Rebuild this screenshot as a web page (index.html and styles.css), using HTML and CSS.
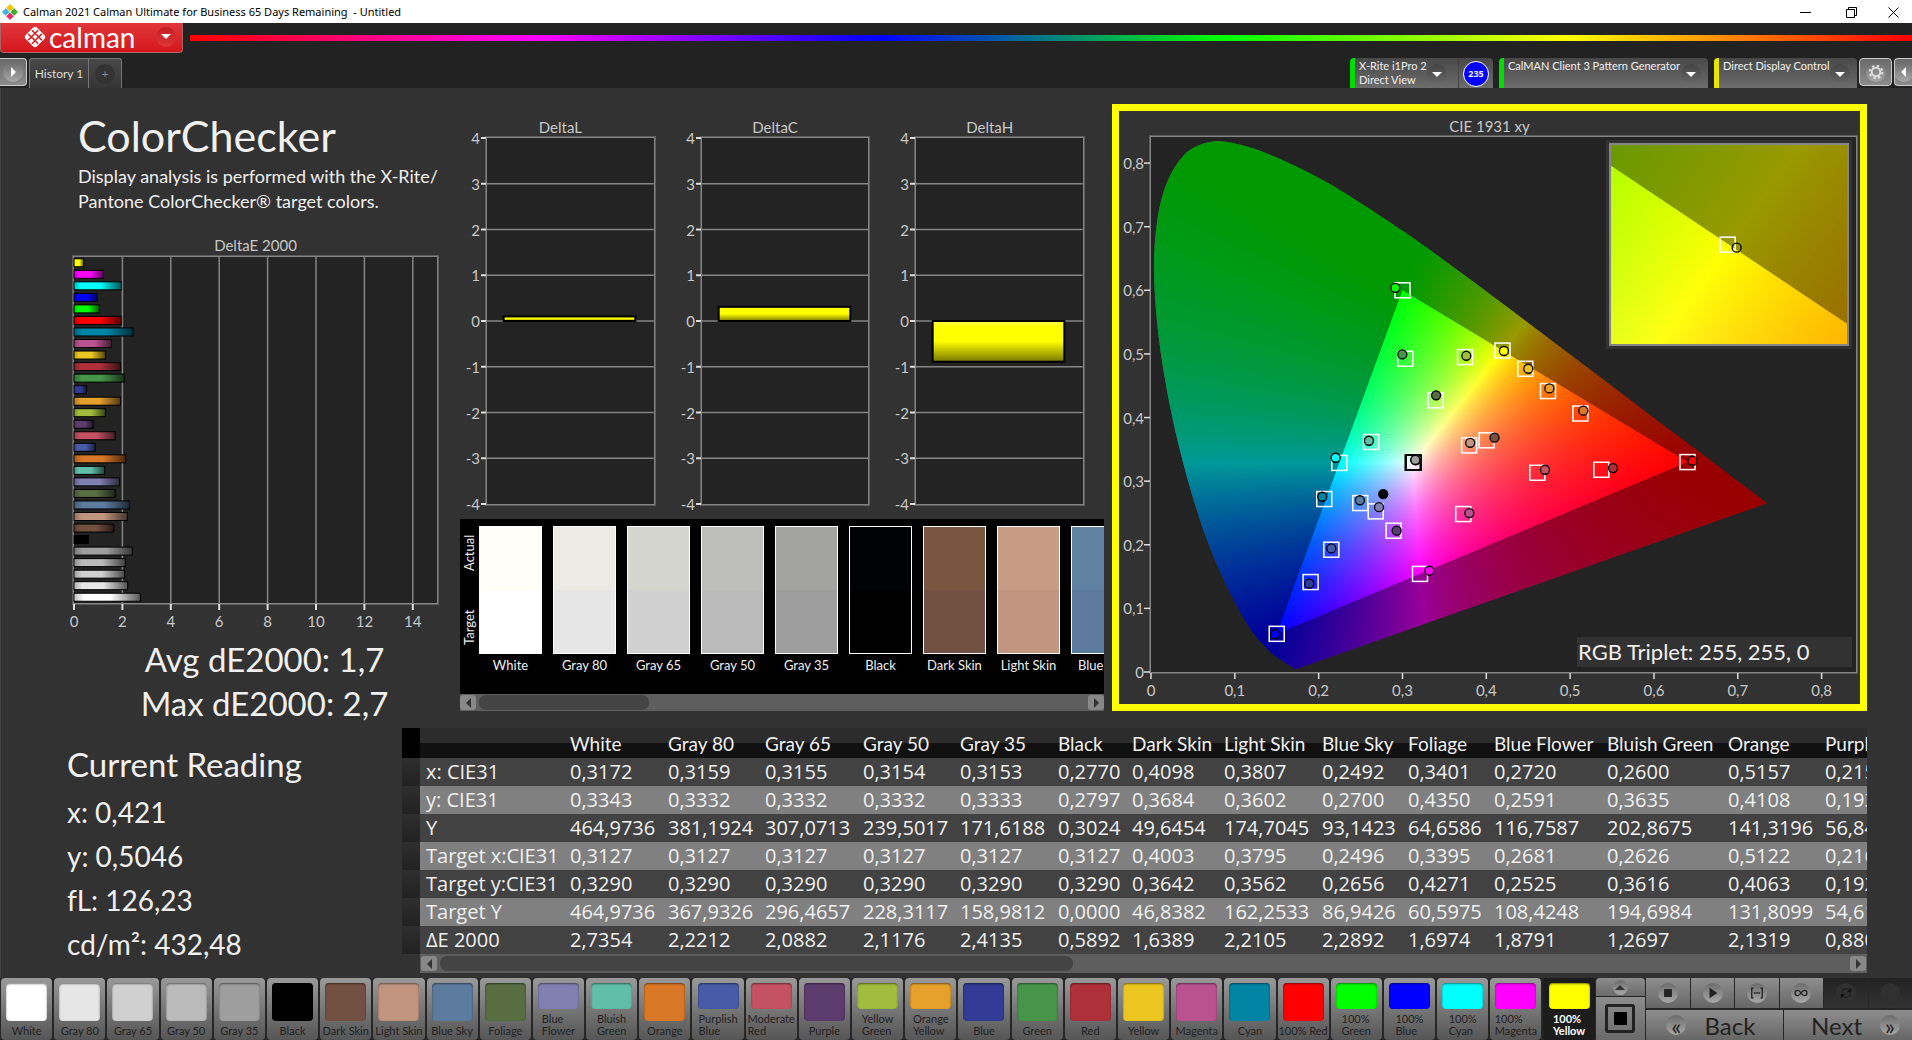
FILE: index.html
```html
<!DOCTYPE html>
<html lang="en">
<head>
  <meta charset="UTF-8">
  <meta name="viewport" content="width=device-width, initial-scale=1.0">
  <title>Calman 2021 - Untitled</title>
  <link rel="stylesheet" href="styles.css">
</head>
<body>
  <header class="titlebar">
    <svg class="app-icon" viewBox="0 0 16 16">
      <path d="M8 0l4 4-4 4-4-4z" fill="#f5c400"/>
      <path d="M4 4l4 4-4 4-4-4z" fill="#3fb4e8"/>
      <path d="M12 4l4 4-4 4-4-4z" fill="#3fae2a"/>
      <path d="M8 8l4 4-4 4-4-4z" fill="#ee2a6e"/>
      <path d="M4 4l4 4 4-4M4 12l4-4 4 4" fill="none" stroke="#fff"/>
    </svg>
    <span class="window-title">Calman 2021 Calman Ultimate for Business 65 Days Remaining&nbsp; - Untitled</span>
    <button class="win-btn" aria-label="Minimize"><svg viewBox="0 0 11 11"><path d="M0 5.500h11"/></svg></button>
    <button class="win-btn" aria-label="Restore"><svg viewBox="0 0 11 11"><path d="M.5 2.500h8v8h-8zM2.500 2.500v-2h8v8h-2"/></svg></button>
    <button class="win-btn win-close" aria-label="Close"><svg viewBox="0 0 11 11"><path d="M.5.500l10 10M10.500.500l-10 10"/></svg></button>
  </header>

  <div class="brandbar">
    <button class="brand">
      <svg class="brand-icon" viewBox="0 0 24 24">
        <rect x="4" y="4" width="16" height="16" rx="3" transform="rotate(45 12 12)" fill="#fff"/>
        <g transform="rotate(45 12 12)" fill="none" stroke="#d4222a" stroke-width="1.500">
          <path d="M9.400 5v14M14.600 5v14M5 9.400h14M5 14.600h14"/>
        </g>
      </svg>
      <span class="brand-name">calman</span>
      <span class="knob knob-red"><i class="caret"></i></span>
    </button>
    <div class="rainbow"></div>
  </div>

  <nav class="tabs">
    <button class="side-btn side-left" aria-label="Expand left panel"><span class="knob knob-light"><i class="arrow-right"></i></span></button>
    <div class="tab-group">
      <button class="tab">History 1</button>
      <button class="tab tab-add" aria-label="Add history"><span class="knob">+</span></button>
    </div>
    <div class="devices">
      <button class="device device-meter">
        <span class="device-name">X-Rite i1Pro 2<br>Direct View</span>
        <span class="knob"><i class="caret"></i></span>
        <span class="badge-cell"><span class="badge">235</span></span>
      </button>
      <button class="device device-source">
        <span class="device-name">CalMAN Client 3 Pattern Generator</span>
        <span class="knob"><i class="caret"></i></span>
      </button>
      <button class="device device-display">
        <span class="device-name">Direct Display Control</span>
        <span class="knob"><i class="caret"></i></span>
      </button>
      <button class="side-btn" aria-label="Settings">
        <span class="knob knob-light">
          <svg class="gear" viewBox="0 0 16 16">
            <circle cx="8" cy="8" r="4.300" fill="none" stroke="#ddd" stroke-width="2"/>
            <circle cx="8" cy="8" r="6.300" fill="none" stroke="#ddd" stroke-width="2" stroke-dasharray="2.500 2.450"/>
          </svg>
        </span>
      </button>
      <button class="side-btn side-right" aria-label="Expand right panel"><span class="knob knob-light"><i class="arrow-left"></i></span></button>
    </div>
  </nav>

  <main class="workspace">
    <section class="charts">
      <div class="summary">
        <h1>ColorChecker</h1>
        <p class="intro">Display analysis is performed with the X-Rite/<br>Pantone ColorChecker® target colors.</p>
        <h2 class="chart-title">DeltaE 2000</h2>
        <div class="plot plot-de"><svg id="deltaE"></svg></div>
        <div class="totals">Avg dE2000: 1,7<br>Max dE2000: 2,7</div>
      </div>

      <div class="middle">
        <div class="deltas">
          <div class="delta"><h2 class="chart-title">DeltaL</h2><div class="plot"><svg id="deltaL"></svg></div></div>
          <div class="delta"><h2 class="chart-title">DeltaC</h2><div class="plot"><svg id="deltaC"></svg></div></div>
          <div class="delta"><h2 class="chart-title">DeltaH</h2><div class="plot"><svg id="deltaH"></svg></div></div>
        </div>
        <div class="swatches">
          <div class="swatch-side"><span>Target</span><span>Actual</span></div>
          <div class="swatch-list" id="swatches"></div>
        </div>
        <div class="scroll">
          <button class="scroll-btn" aria-label="Scroll left"><i class="arrow-left"></i></button>
          <div class="scroll-track"><div class="scroll-thumb thumb-swatches"></div></div>
          <button class="scroll-btn" aria-label="Scroll right"><i class="arrow-right"></i></button>
        </div>
      </div>

      <div class="cie">
        <h2 class="chart-title">CIE 1931 xy</h2>
        <div class="plot plot-cie">
          <canvas id="gamut"></canvas>
          <svg id="cieMarks"></svg>
          <div class="inset">
            <canvas id="insetGamut"></canvas>
            <svg id="insetMarks"></svg>
          </div>
          <div class="triplet">RGB Triplet: 255, 255, 0</div>
        </div>
      </div>
    </section>

    <section class="readings">
      <div class="current">
        <h2>Current Reading</h2>
        <p>x: 0,421</p>
        <p>y: 0,5046</p>
        <p>fL: 126,23</p>
        <p>cd/m²: 432,48</p>
      </div>
      <div class="data">
        <div class="data-view">
          <table>
            <colgroup>
              <col class="c-handle"><col class="c-label"><col class="c-98"><col class="c-97"><col class="c-98"><col class="c-97"><col class="c-98"><col class="c-74"><col class="c-92"><col class="c-98"><col class="c-86"><col class="c-86"><col class="c-113"><col class="c-121"><col class="c-97"><col class="c-113">
            </colgroup>
            <thead>
              <tr><th class="handle"></th><th></th><th>White</th><th>Gray 80</th><th>Gray 65</th><th>Gray 50</th><th>Gray 35</th><th>Black</th><th>Dark Skin</th><th>Light Skin</th><th>Blue Sky</th><th>Foliage</th><th>Blue Flower</th><th>Bluish Green</th><th>Orange</th><th>Purplish Blue</th></tr>
            </thead>
            <tbody>
              <tr><td class="handle"></td><td>x: CIE31</td><td>0,3172</td><td>0,3159</td><td>0,3155</td><td>0,3154</td><td>0,3153</td><td>0,2770</td><td>0,4098</td><td>0,3807</td><td>0,2492</td><td>0,3401</td><td>0,2720</td><td>0,2600</td><td>0,5157</td><td>0,2151</td></tr>
              <tr><td class="handle"></td><td>y: CIE31</td><td>0,3343</td><td>0,3332</td><td>0,3332</td><td>0,3332</td><td>0,3333</td><td>0,2797</td><td>0,3684</td><td>0,3602</td><td>0,2700</td><td>0,4350</td><td>0,2591</td><td>0,3635</td><td>0,4108</td><td>0,1939</td></tr>
              <tr><td class="handle"></td><td>Y</td><td>464,9736</td><td>381,1924</td><td>307,0713</td><td>239,5017</td><td>171,6188</td><td>0,3024</td><td>49,6454</td><td>174,7045</td><td>93,1423</td><td>64,6586</td><td>116,7587</td><td>202,8675</td><td>141,3196</td><td>56,8413</td></tr>
              <tr><td class="handle"></td><td>Target x:CIE31</td><td>0,3127</td><td>0,3127</td><td>0,3127</td><td>0,3127</td><td>0,3127</td><td>0,3127</td><td>0,4003</td><td>0,3795</td><td>0,2496</td><td>0,3395</td><td>0,2681</td><td>0,2626</td><td>0,5122</td><td>0,2160</td></tr>
              <tr><td class="handle"></td><td>Target y:CIE31</td><td>0,3290</td><td>0,3290</td><td>0,3290</td><td>0,3290</td><td>0,3290</td><td>0,3290</td><td>0,3642</td><td>0,3562</td><td>0,2656</td><td>0,4271</td><td>0,2525</td><td>0,3616</td><td>0,4063</td><td>0,1922</td></tr>
              <tr><td class="handle"></td><td>Target Y</td><td>464,9736</td><td>367,9326</td><td>296,4657</td><td>228,3117</td><td>158,9812</td><td>0,0000</td><td>46,8382</td><td>162,2533</td><td>86,9426</td><td>60,5975</td><td>108,4248</td><td>194,6984</td><td>131,8099</td><td>54,6120</td></tr>
              <tr><td class="handle"></td><td>ΔE 2000</td><td>2,7354</td><td>2,2212</td><td>2,0882</td><td>2,1176</td><td>2,4135</td><td>0,5892</td><td>1,6389</td><td>2,2105</td><td>2,2892</td><td>1,6974</td><td>1,8791</td><td>1,2697</td><td>2,1319</td><td>0,8802</td></tr>
            </tbody>
          </table>
        </div>
        <div class="scroll scroll-data">
          <button class="scroll-btn" aria-label="Scroll left"><i class="arrow-left"></i></button>
          <div class="scroll-track"><div class="scroll-thumb thumb-data"></div></div>
          <button class="scroll-btn" aria-label="Scroll right"><i class="arrow-right"></i></button>
        </div>
      </div>
    </section>
  </main>

  <footer class="dock">
    <div class="tiles" id="tiles"></div>
    <div class="stack">
      <button class="stack-up" aria-label="Previous row"><span class="knob knob-light"><i class="arrow-up"></i></span></button>
      <button class="stack-window" aria-label="Pattern window"><span class="frame"></span></button>
    </div>
    <div class="transport">
      <div class="media">
        <button aria-label="Stop"><span class="knob knob-light"><svg viewBox="0 0 16 16"><path d="M3.500 3.500h9v9h-9z"/></svg></span></button>
        <button aria-label="Play"><span class="knob knob-light"><svg viewBox="0 0 16 16"><path d="M4 2l9 6-9 6z"/></svg></span></button>
        <button aria-label="Read series"><span class="knob knob-light"><svg viewBox="0 0 16 16"><path class="line" d="M4 2.500H2v11h2M12 2.500h2v11h-2M4.500 8h2M7 8h2M9.500 8h2"/></svg></span></button>
        <button aria-label="Read continuous"><span class="knob knob-light"><svg viewBox="0 0 16 16"><path class="line" d="M8 8C6.500 5.500 5.500 5 4.200 5a3 3 0 0 0 0 6C5.500 11 6.500 10.500 8 8s2.500-3 3.800-3a3 3 0 0 1 0 6C10.500 11 9.500 10.500 8 8z"/></svg></span></button>
        <button class="off" aria-label="Refresh"><span class="knob"><svg viewBox="0 0 16 16"><path class="line" d="M3 7.500a5 5 0 0 1 8.500-3M13 8.500a5 5 0 0 1-8.500 3"/><path d="M14 2v5H9zM2 14V9h5z"/></svg></span></button>
        <button class="off" aria-label="Record"><span class="knob"></span></button>
      </div>
      <div class="steps">
        <button class="back"><span class="knob knob-light">«</span>Back</button>
        <button class="next">Next<span class="knob knob-light">»</span></button>
      </div>
    </div>
  </footer>

  <script src="script.js"></script>
</body>
</html>
```
FILE: styles.css
```css
:root {
  --bar: #222;
  --panel: #323232;
  --plot: #232323;
  --line: #858585;
  --text: #f0f0f0;
  --muted: #c8c8c8;
  --select: #ff0;
}
* {
  box-sizing: border-box;
}
body {
  margin: 0;
  min-height: 100vh;
  display: flex;
  flex-direction: column;
  overflow: hidden;
  font-family: Lato, "Open Sans", sans-serif;
  background: var(--panel);
  color: var(--text);
}
button {
  margin: 0;
  padding: 0;
  border: none;
  background: none;
  font: inherit;
  color: inherit;
  cursor: pointer;
}
h1, h2, p {
  margin: 0;
  font-weight: 400;
}

/* Window title */
.titlebar {
  display: flex;
  align-items: center;
  height: 23px;
  padding-left: 2px;
  background: #fff;
  color: #000;
}
.app-icon {
  width: 16px;
  height: 16px;
}
.window-title {
  flex: 1;
  margin-left: 5px;
  font: 11px "Noto Sans", sans-serif;
}
.win-btn {
  width: 46px;
  height: 22px;
}
.win-close {
  width: 38px;
}
.win-btn svg {
  width: 11px;
  height: 11px;
  fill: none;
  stroke: #000;
}

/* Brand row */
.brandbar {
  display: flex;
  align-items: flex-start;
  gap: 7px;
  height: 35px;
  background: var(--bar);
}
.brand {
  display: flex;
  align-items: center;
  width: 183px;
  height: 30px;
  padding: 0 6px 2px 22px;
  border: 1px solid #a66;
  border-top: none;
  border-radius: 0 0 4px 4px;
  background: linear-gradient(#e0383c, #d4161c);
  color: #fff;
}
.brand-icon {
  width: 24px;
  height: 24px;
}
.brand-name {
  flex: 1;
  margin-left: 2px;
  font-size: 28px;
  line-height: 28px;
  text-align: left;
}
.rainbow {
  flex: 1;
  height: 6px;
  margin-top: 12px;
  background: linear-gradient(90deg, #f00, #f0f, #00f, #0f0, #ff0, #f00);
}

/* Round button centres and arrows */
.knob {
  display: inline-flex;
  flex: none;
  align-items: center;
  justify-content: center;
  width: 20px;
  height: 20px;
  border-radius: 50%;
  background: linear-gradient(#444, #666);
}
.knob-light {
  background: linear-gradient(#6c6c6c, #a8a8a8);
}
.knob-red {
  background: linear-gradient(#c01c20, #e0383c);
}
.caret, .arrow-right, .arrow-left, .arrow-up {
  width: 0;
  height: 0;
  border: 5px solid transparent;
}
.caret {
  margin-top: 5px;
  border-top-color: #fff;
}
.arrow-right {
  margin-left: 5px;
  border-left-color: #fff;
}
.arrow-left {
  margin-right: 5px;
  border-right-color: #fff;
}
.arrow-up {
  margin-bottom: 5px;
  border-bottom-color: #333;
}

/* Tabs and devices */
.tabs {
  display: flex;
  height: 30px;
  background: var(--bar);
}
.side-btn {
  display: flex;
  align-items: center;
  justify-content: center;
  width: 33px;
  height: 28px;
  border: 1px solid #ccc;
  border-radius: 4px;
  background: linear-gradient(#6a6a6a, #8c8c8c);
}
.side-left {
  width: 27px;
  border-left: none;
  border-radius: 0 4px 4px 0;
}
.side-right {
  width: 18px;
  border-right: none;
  border-radius: 4px 0 0 4px;
  overflow: hidden;
}
.gear {
  width: 16px;
  height: 16px;
}
.tab-group {
  display: flex;
  margin-left: 2px;
  border: 1px solid #777;
  border-bottom: none;
  border-radius: 3px 3px 0 0;
  background: linear-gradient(#484848, #353535);
}
.tab {
  width: 58px;
  font-size: 12px;
  color: #ddd;
}
.tab-add {
  width: 33px;
  border-left: 1px solid #777;
}
.tab-add .knob {
  background: #333;
  color: #888;
}
.devices {
  display: flex;
  gap: 2px;
  margin-left: auto;
}
.device {
  display: flex;
  align-items: flex-start;
  height: 30px;
  margin-right: 4px;
  padding: 1px 0 0 4px;
  border-left: 5px solid #0d0;
  border-radius: 4px 4px 0 0;
  background: linear-gradient(#484848, #6c6c6c);
  font-size: 11px;
  line-height: 14px;
  text-align: left;
}
.device .knob {
  margin: 5px 7px 0 0;
}
.device-name {
  flex: 1;
  white-space: nowrap;
}
.device-meter {
  width: 143px;
}
.device-meter .knob {
  margin-right: 11px;
}
.device-source {
  width: 209px;
}
.device-display {
  width: 143px;
  margin-right: 0;
  border-left-color: #e6e600;
}
.badge-cell {
  display: flex;
  align-items: center;
  justify-content: center;
  width: 35px;
  height: 29px;
  border-left: 1px solid #444;
}
.badge {
  width: 26px;
  height: 26px;
  border: 1px solid #fff;
  border-radius: 50%;
  background: #00f;
  font: bold 9px/24px "Open Sans", sans-serif;
  text-align: center;
}

/* Workspace */
.workspace {
  flex: 1;
  display: flex;
  flex-direction: column;
  gap: 17px;
  padding: 16px 45px 5px 0;
  border-left: 1px solid #444;
}
.charts {
  flex: 1;
  display: grid;
  grid-template-columns: 459fr 652fr 755fr;
}
.chart-title {
  font-size: 15px;
  line-height: 18px;
  text-align: center;
  color: var(--muted);
}
.plot {
  position: relative;
  flex: 1;
  border: 1px solid var(--line);
  outline: 1px solid #5c5c5c;
  background: var(--plot);
}
.plot svg {
  position: absolute;
  inset: 0;
  width: 100%;
  height: 100%;
  overflow: visible;
}
.plot text {
  fill: var(--muted);
  font-size: 15px;
}
.summary {
  display: flex;
  flex-direction: column;
}
h1 {
  margin: 7px 0 0 77px;
  font-size: 43px;
  line-height: 50px;
}
.intro {
  margin: 3px 0 0 77px;
  font-size: 18px;
  line-height: 25px;
  white-space: nowrap;
}
.summary .chart-title {
  margin: 22px 22px 2px 72px;
}
.plot-de {
  margin: 0 22px 0 72px;
}
.totals {
  margin: 33px 0 -14px 68px;
  font-size: 33px;
  line-height: 44px;
  text-align: center;
}
.middle {
  display: flex;
  flex-direction: column;
  min-width: 0;
  margin-right: 8px;
}
.deltas {
  flex: 1;
  display: flex;
  gap: 14px;
  padding: 14px 14px 14px 0;
}
.delta {
  flex: 1;
  display: flex;
  flex-direction: column;
}
.delta .chart-title {
  margin-bottom: 1px;
}
.delta .plot {
  margin: 0 6px 0 26px;
}

/* Actual and target swatches */
.swatches {
  display: flex;
  height: 175px;
  padding: 7px 0 0;
  background: #000;
  overflow: hidden;
}
.swatch-side {
  display: flex;
  justify-content: space-between;
  width: 19px;
  height: 128px;
  padding: 9px 0;
  font-size: 13px;
  line-height: 19px;
  writing-mode: vertical-rl;
  transform: rotate(180deg);
}
.swatch-list {
  display: flex;
  gap: 11px;
}
.swatch {
  flex: none;
  width: 63px;
  font-size: 13px;
  line-height: 22px;
  text-align: center;
  white-space: nowrap;
}
.swatch-color {
  display: flex;
  flex-direction: column;
  height: 128px;
  border: 1px solid #fff;
}
.swatch-color div {
  flex: 1;
}

/* Scroll bars */
.scroll {
  display: flex;
  align-items: center;
  gap: 3px;
  height: 17px;
  background: #5e5e5e;
}
.scroll-btn {
  display: flex;
  align-items: center;
  justify-content: center;
  width: 16px;
  height: 15px;
  border-radius: 3px;
  background: #888;
}
.scroll-btn .arrow-left {
  border-right-color: #333;
}
.scroll-btn .arrow-right {
  border-left-color: #333;
}
.scroll-track {
  flex: 1;
}
.scroll-thumb {
  height: 15px;
  border-radius: 7px;
  background: #444;
}
.thumb-swatches {
  width: 28%;
}
.thumb-data {
  width: 45%;
}

/* CIE diagram */
.cie {
  display: flex;
  flex-direction: column;
  padding: 6px 3px 31px 31px;
  border: 7px solid var(--select);
}
.cie .chart-title {
  margin: 0 0 1px -28px;
}
.plot-cie canvas, .inset canvas {
  position: absolute;
  inset: 0;
  width: 100%;
  height: 100%;
}
.inset {
  position: absolute;
  left: 65%;
  top: 6px;
  width: 34%;
  height: 38%;
  border: 2px solid var(--line);
  outline: 3px solid var(--panel);
}
.triplet {
  position: absolute;
  right: 4px;
  bottom: 5px;
  width: 39%;
  padding-left: 1px;
  background: var(--panel);
  font-size: 22px;
  line-height: 30px;
}

/* Readings and table */
.readings {
  display: flex;
}
.current {
  width: 401px;
  padding: 14px 0 0 66px;
  font-size: 28px;
  line-height: 44px;
}
.current h2 {
  margin-bottom: 4px;
  font-size: 33px;
}
.data {
  flex: 1;
  min-width: 0;
}
.data-view {
  overflow: hidden;
}
table {
  width: 1530px;
  table-layout: fixed;
  border-collapse: collapse;
  text-align: left;
  font: 20px "Open Sans", sans-serif;
}
th {
  height: 30px;
  padding: 0 0 0 6px;
  background: linear-gradient(#2c2c2c 50%, #111 50%);
  font: 19px Lato, sans-serif;
  white-space: nowrap;
}
td {
  height: 28px;
  padding: 0 0 0 6px;
  background: #424242;
  line-height: 28px;
  white-space: nowrap;
}
tbody tr:nth-child(even) td {
  background: #808080;
}
tbody tr td.handle {
  background: linear-gradient(#2e2e2e, #222);
}
th.handle {
  background: #000;
}
.c-handle { width: 18px; }
.c-label { width: 144px; }
.c-74 { width: 74px; }
.c-86 { width: 86px; }
.c-92 { width: 92px; }
.c-97 { width: 97px; }
.c-98 { width: 98px; }
.c-113 { width: 113px; }
.c-121 { width: 121px; }
.scroll-data {
  height: 19px;
  margin-left: 18px;
  padding: 0 1px;
}

/* Bottom dock */
.dock {
  display: flex;
  height: 62px;
  background: #262626;
  color: #222;
}
.tiles {
  flex: 1596;
  display: flex;
  gap: 2px;
  padding: 0 1px;
}
.tile {
  flex: 1 1 0;
  min-width: 0;
  display: flex;
  flex-direction: column;
  align-items: center;
  padding: 5px 0 3px;
  border-radius: 4px;
  background: linear-gradient(#999, #555);
  font-size: 11px;
  line-height: 12px;
  white-space: nowrap;
}
.tile-color {
  flex: 1;
  width: 41px;
  margin-bottom: 4px;
  border-radius: 4px;
  box-shadow: inset 0 1px 2px rgba(0, 0, 0, 0.5);
}
.tile-label {
  text-align: left;
}
.tile.active {
  background: #1c1c1c;
  color: #fff;
  font-weight: bold;
}
.stack {
  flex: 50;
  display: flex;
  flex-direction: column;
  gap: 1px;
  padding-right: 1px;
}
.stack button {
  display: flex;
  align-items: center;
  justify-content: center;
  background: linear-gradient(#8c8c8c, #6a6a6a);
}
.stack .stack-up {
  height: 18px;
  border-radius: 4px 4px 0 0;
}
.stack-up .knob {
  width: 15px;
  height: 15px;
}
.stack .stack-window {
  flex: 1;
}
.frame {
  width: 30px;
  height: 29px;
  border: 3px solid #222;
  border-radius: 3px;
  background: linear-gradient(#000, #000) center / 13px 13px no-repeat;
}
.transport {
  flex: 266;
  display: flex;
  flex-direction: column;
  gap: 2px;
}
.media, .steps {
  flex: 1;
  display: flex;
  gap: 1px;
}
.media button, .steps button {
  flex: 1;
  display: flex;
  align-items: center;
  justify-content: center;
  background: linear-gradient(#8e8e8e, #666);
}
.media svg {
  width: 14px;
  height: 14px;
  fill: #222;
}
.media .line {
  fill: none;
  stroke: #222;
  stroke-width: 1.5;
}
.media .off {
  background: linear-gradient(#222, #333);
}
.media .off .knob {
  background: #303030;
}
.media .off svg {
  fill: #111;
}
.steps button {
  gap: 18px;
  font-size: 24px;
}
.steps .back {
  justify-content: flex-start;
  padding-left: 20px;
}
.steps .next {
  justify-content: flex-end;
  padding-right: 12px;
}
```
FILE: script.js
```js
// name, target colour, deltaE, target xy, measured xy
const patches = [
  ["White", "#ffffff", 2.74, 0.3127, 0.3290, 0.3172, 0.3343],
  ["Gray 80", "#e6e6e6", 2.22, 0.3127, 0.3290, 0.3159, 0.3332],
  ["Gray 65", "#d0d0d0", 2.09, 0.3127, 0.3290, 0.3155, 0.3332],
  ["Gray 50", "#bababa", 2.12, 0.3127, 0.3290, 0.3154, 0.3332],
  ["Gray 35", "#9e9e9e", 2.41, 0.3127, 0.3290, 0.3153, 0.3333],
  ["Black", "#000000", 0.59, 0.3127, 0.3290, 0.2770, 0.2797],
  ["Dark Skin", "#735142", 1.64, 0.4003, 0.3642, 0.4098, 0.3684],
  ["Light Skin", "#c29580", 2.21, 0.3795, 0.3562, 0.3807, 0.3602],
  ["Blue Sky", "#5d7a9f", 2.29, 0.2496, 0.2656, 0.2492, 0.2700],
  ["Foliage", "#596d43", 1.70, 0.3395, 0.4271, 0.3401, 0.4350],
  ["Blue Flower", "#8280b2", 1.88, 0.2681, 0.2525, 0.2720, 0.2591],
  ["Bluish Green", "#61bfa9", 1.27, 0.2626, 0.3616, 0.2600, 0.3635],
  ["Orange", "#d97827", 2.13, 0.5122, 0.4063, 0.5157, 0.4108],
  ["Purplish Blue", "#475ba8", 0.88, 0.2151, 0.1922, 0.2151, 0.1943],
  ["Moderate Red", "#c55262", 1.70, 0.4608, 0.3132, 0.4700, 0.3179],
  ["Purple", "#5b3c6c", 0.80, 0.2894, 0.2221, 0.2930, 0.2221],
  ["Yellow Green", "#a0bd3d", 1.30, 0.3746, 0.4950, 0.3761, 0.4971],
  ["Orange Yellow", "#e6a12d", 1.92, 0.4736, 0.4416, 0.4752, 0.4458],
  ["Blue", "#323b95", 0.52, 0.1904, 0.1414, 0.1888, 0.1388],
  ["Green", "#469549", 2.08, 0.3033, 0.4924, 0.2998, 0.4992],
  ["Red", "#ae313a", 1.92, 0.5372, 0.3179, 0.5511, 0.3206],
  ["Yellow", "#edc721", 1.30, 0.4465, 0.4767, 0.4501, 0.4767],
  ["Magenta", "#b9528f", 1.55, 0.3725, 0.2483, 0.3797, 0.2499],
  ["Cyan", "#0085a5", 2.45, 0.2067, 0.2719, 0.2043, 0.2755],
  ["100% Red", "#ff0000", 1.96, 0.6400, 0.3300, 0.6461, 0.3321],
  ["100% Green", "#00ff00", 1.05, 0.3000, 0.6000, 0.2914, 0.6039],
  ["100% Blue", "#0000ff", 0.97, 0.1500, 0.0600, 0.1479, 0.0592],
  ["100% Cyan", "#00ffff", 1.96, 0.2246, 0.3287, 0.2203, 0.3368],
  ["100% Magenta", "#ff00ff", 1.22, 0.3209, 0.1542, 0.3320, 0.1592],
  ["100% Yellow", "#ffff00", 0.40, 0.4193, 0.5053, 0.4210, 0.5046]
];

const measured = ["#fffef8", "#ebeae5", "#d5d5d0", "#bebebc", "#a3a3a1", "#010204", "#7a5640", "#c89c82", "#5f82a0"];

const locus = [
  [0.1741, 0.0050], [0.1714, 0.0051], [0.1644, 0.0109], [0.1566, 0.0177], [0.1440, 0.0297],
  [0.1241, 0.0578], [0.1096, 0.0868], [0.0913, 0.1327], [0.0687, 0.2007], [0.0454, 0.2950],
  [0.0235, 0.4127], [0.0082, 0.5384], [0.0039, 0.6548], [0.0139, 0.7502], [0.0389, 0.8120],
  [0.0743, 0.8338], [0.1142, 0.8262], [0.1547, 0.8059], [0.1929, 0.7816], [0.2296, 0.7543],
  [0.3016, 0.6923], [0.3731, 0.6245], [0.4441, 0.5547], [0.5125, 0.4866], [0.5752, 0.4242],
  [0.6270, 0.3725], [0.6658, 0.3340], [0.6915, 0.3083], [0.7190, 0.2809], [0.7347, 0.2653]
];

const MAX = 0.841;
const byId = (id) => document.getElementById(id);

// DeltaE bars, 0 to 15
function drawDeltaE() {
  let out = "";
  for (let v = 2; v < 15; v += 2) {
    out += `<line x1="${v / 0.15}%" x2="${v / 0.15}%" y1="0" y2="100%" stroke="#858585" stroke-width="1.5"/>`;
  }
  for (let v = 0; v < 15; v += 2) {
    out += `<svg x="${v / 0.15}%" y="100%" overflow="visible"><path d="M0 1v6" stroke="#ddd" stroke-width="2"/>
      <text y="24" text-anchor="middle">${v}</text></svg>`;
  }
  let defs = "";
  patches.slice().reverse().forEach(([name, color, de], i) => {
    defs += `<linearGradient id="de${i}"><stop offset="0" stop-color="${color}" stop-opacity="0.75"/>
      <stop offset="0.15" stop-color="${color}"/><stop offset="0.55" stop-color="${color}"/>
      <stop offset="1" stop-color="${color}" stop-opacity="0.35"/></linearGradient>`;
    out += `<svg y="${(i + 0.5) / 0.3}%" overflow="visible">
      <rect y="-4" width="${de / 0.15}%" height="8" fill="#000"/>
      <rect y="-4" width="${de / 0.15}%" height="8" fill="url(#de${i})" stroke="#000"/></svg>`;
  });
  byId("deltaE").innerHTML = `<defs>${defs}</defs>${out}`;
}

// Single bar chart, -4 to 4
function drawDelta(id, value) {
  let out = `<defs><linearGradient id="${id}Fill" x2="0" y2="1"><stop offset="0" stop-color="#ffff50"/>
    <stop offset="0.15" stop-color="#ff0"/><stop offset="0.5" stop-color="#ff0"/><stop offset="1" stop-color="#770"/></linearGradient></defs>`;
  for (let v = -4; v <= 4; v++) {
    const y = (4 - v) * 12.5;
    if (Math.abs(v) < 4) {
      out += `<line x1="0" x2="100%" y1="${y}%" y2="${y}%" stroke="#858585" stroke-width="1.5"/>`;
    }
    out += `<svg y="${y}%" overflow="visible"><path d="M-6 0h5" stroke="#ddd" stroke-width="2"/>
      <text x="-7" y="6" text-anchor="end">${v}</text></svg>`;
  }
  const top = (4 - Math.max(value, 0)) * 12.5;
  out += `<rect x="10%" width="79%" y="${top}%" height="${Math.abs(value) * 12.5}%" fill="url(#${id}Fill)" stroke="#000" stroke-width="2"/>`;
  byId(id).innerHTML = out;
}

function buildSwatches() {
  byId("swatches").innerHTML = measured.map((actual, i) => `<div class="swatch">
    <div class="swatch-color"><div style="background:${actual}"></div><div style="background:${patches[i][1]}"></div></div>
    ${patches[i][0]}</div>`).join("");
}

function buildTiles() {
  byId("tiles").innerHTML = patches.map(([name, color], i) => {
    const wraps = name.length > 10 || (name.startsWith("100%") && name !== "100% Red");
    const label = wraps ? name.replace(" ", "<br>") : name;
    return `<button class="tile${i === patches.length - 1 ? " active" : ""}">
      <span class="tile-color" style="background:${color}"></span><span class="tile-label">${label}</span></button>`;
  }).join("");
}

// Brightest linear RGB colour at a chromaticity
function xyColor(x, y) {
  const X = x / y;
  const Z = (1 - x - y) / y;
  const rgb = [
    3.2406 * X - 1.5372 - 0.4986 * Z,
    -0.9689 * X + 1.8758 + 0.0415 * Z,
    0.0557 * X - 0.2040 + 1.0570 * Z
  ].map((c) => Math.max(c, 0));
  const peak = Math.max(...rgb);
  return rgb.map((c) => 255 * c / peak);
}

function paintGamut(canvas, x0, x1, y0, y1) {
  const w = canvas.width = canvas.clientWidth;
  const h = canvas.height = canvas.clientHeight;
  const px = (x) => (x - x0) / (x1 - x0) * w;
  const py = (y) => (y1 - y) / (y1 - y0) * h;

  const fill = document.createElement("canvas");
  fill.width = w;
  fill.height = h;
  const fctx = fill.getContext("2d");
  const img = fctx.createImageData(w, h);
  for (let j = 0; j < h; j++) {
    for (let i = 0; i < w; i++) {
      const x = x0 + (i + 0.5) / w * (x1 - x0);
      const y = y1 - (j + 0.5) / h * (y1 - y0);
      const [r, g, b] = xyColor(x, y);
      img.data.set([r, g, b, 255], (j * w + i) * 4);
    }
  }
  fctx.putImageData(img, 0, 0);

  const ctx = canvas.getContext("2d");
  ctx.beginPath();
  ctx.moveTo(px(locus[0][0]), py(locus[0][1]));
  for (let i = 0; i < locus.length - 1; i++) {
    const a = locus[Math.max(i - 1, 0)], b = locus[i], c = locus[i + 1], d = locus[Math.min(i + 2, locus.length - 1)];
    ctx.bezierCurveTo(
      px(b[0] + (c[0] - a[0]) / 6), py(b[1] + (c[1] - a[1]) / 6),
      px(c[0] - (d[0] - b[0]) / 6), py(c[1] - (d[1] - b[1]) / 6),
      px(c[0]), py(c[1]));
  }
  ctx.closePath();
  ctx.clip();
  ctx.drawImage(fill, 0, 0);

  // darken everything outside Rec. 709
  ctx.beginPath();
  ctx.rect(0, 0, w, h);
  ctx.moveTo(px(0.64), py(0.33));
  ctx.lineTo(px(0.30), py(0.60));
  ctx.lineTo(px(0.15), py(0.06));
  ctx.closePath();
  ctx.fillStyle = "rgba(0, 0, 0, 0.4)";
  ctx.fill("evenodd");
}

function drawCieMarks() {
  let out = "";
  for (let i = 0; i <= 8; i++) {
    const pos = i / 10 / MAX * 100;
    const label = i === 0 ? "0" : `0,${i}`;
    out += `<svg x="${pos}%" y="100%" overflow="visible"><path d="M0 1v6" stroke="#ddd" stroke-width="1.5"/><text y="24" text-anchor="middle">${label}</text></svg>
      <svg y="${100 - pos}%" overflow="visible"><path d="M-7 0h6" stroke="#ddd" stroke-width="1.5"/><text x="-7" y="6" text-anchor="end">${label}</text></svg>`;
  }
  patches.forEach(([name, color, de, tx, ty], i) => {
    const stroke = i < 6 ? "#000" : "#fff";
    out += `<svg x="${tx / MAX * 100}%" y="${100 - ty / MAX * 100}%" overflow="visible">
      <rect x="-7.5" y="-7.5" width="15" height="15" fill="none" stroke="${stroke}" stroke-width="1.5"/></svg>`;
  });
  patches.forEach(([name, color, de, tx, ty, x, y]) => {
    out += `<svg x="${x / MAX * 100}%" y="${100 - y / MAX * 100}%" overflow="visible">
      <circle r="4.5" fill="${color}" stroke="#000" stroke-width="1.3"/></svg>`;
  });
  byId("cieMarks").innerHTML = out;
}

function drawInsetMarks() {
  byId("insetMarks").innerHTML = `<svg x="49.5%" y="50%" overflow="visible">
    <rect x="-7.5" y="-7.5" width="15" height="15" fill="none" stroke="#fff" stroke-width="1.5"/>
    <circle cx="9" cy="3" r="4.5" fill="none" stroke="#000" stroke-width="1.3"/></svg>`;
}

function paintAll() {
  paintGamut(byId("gamut"), 0, MAX, 0, MAX);
  paintGamut(byId("insetGamut"), 0.3943, 0.4443, 0.4803, 0.5303);
}

drawDeltaE();
drawDelta("deltaL", 0.1);
drawDelta("deltaC", 0.31);
drawDelta("deltaH", -0.89);
buildSwatches();
buildTiles();
drawCieMarks();
drawInsetMarks();
paintAll();
window.addEventListener("resize", paintAll);
```
